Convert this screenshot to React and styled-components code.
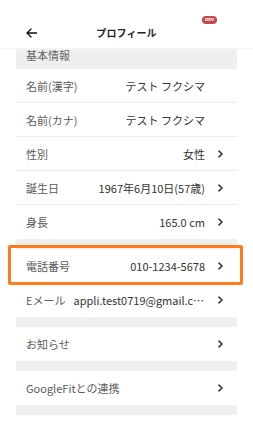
import React from "react";
import styled, { createGlobalStyle } from "styled-components";

const Global = createGlobalStyle`
  html, body { margin: 0; padding: 0; background: #fff; }
  body {
    font-family: "Noto Sans CJK JP", "Noto Sans", sans-serif;
    -webkit-font-smoothing: antialiased;
  }
  * { box-sizing: border-box; }
`;

const Page = styled.div`
  width: 253px;
  height: 445px;
  background: #fff;
  overflow: hidden;
`;

const Header = styled.header`
  position: relative;
  height: 49px;
  padding: 18px 26px 0;
  display: flex;
  align-items: flex-start;
  border-bottom: 1px solid #f6f6f6;
`;

const Back = styled.button`
  width: 12px;
  height: 30px;
  padding: 0;
  border: 0;
  background: none;
  display: flex;
  align-items: center;
  color: #111;
`;

const Title = styled.h1`
  flex: 1;
  margin: 0 12px 0 0;
  height: 30px;
  line-height: 30px;
  text-align: center;
  font-size: 10px;
  font-weight: 700;
  color: #222;
  letter-spacing: 0.1px;
`;

const DevBadge = styled.span`
  position: absolute;
  left: 202px;
  top: 16px;
  width: 15px;
  height: 8px;
  border-radius: 4px;
  background: #c9474a;
  color: #fff;
  font-family: "DejaVu Sans", sans-serif;
  font-size: 4px;
  font-weight: 700;
  line-height: 8px;
  text-align: center;
`;

const List = styled.div`
  margin: 0 16px;
  background: #efefef;
  display: flex;
  flex-direction: column;
`;

const SectionLabel = styled.div`
  height: 20px;
  padding-left: 10px;
  font-size: 11px;
  line-height: 12px;
  color: #666;
`;

const Group = styled.div`
  background: #fff;
  display: flex;
  flex-direction: column;
`;

const Spacer = styled.div`
  height: 10px;
`;

const Row = styled.div`
  position: relative;
  height: 34px;
  padding: 0 14px 0 10px;
  display: flex;
  align-items: center;
  gap: 8px;
  font-size: 11px;
  border-bottom: 1px solid #ededed;
  &:last-child { border-bottom: 0; }
`;

const Label = styled.span`
  flex: none;
  color: #5a5a5a;
  white-space: nowrap;
`;

const Value = styled.span`
  flex: 1;
  min-width: 0;
  text-align: right;
  color: #333;
  white-space: nowrap;
  overflow: hidden;
  text-overflow: ellipsis;
`;

const ChevronBox = styled.span`
  flex: none;
  width: 5px;
  margin-left: 5px;
  display: flex;
  align-items: center;
  visibility: ${(p) => (p.$hidden ? "hidden" : "visible")};
`;

const Highlight = styled.div`
  position: absolute;
  left: -8px;
  right: -6px;
  top: -4px;
  bottom: -3px;
  border: 3px solid #ff7b1c;
  border-radius: 2px;
  pointer-events: none;
`;

const Chevron = ({ hidden }) => (
  <ChevronBox $hidden={hidden}>
    <svg width="5" height="8" viewBox="0 0 5 8">
      <polyline points="1,1.2 4,4 1,6.8" fill="none" stroke="#333" strokeWidth="1.6" strokeLinecap="round" strokeLinejoin="round" />
    </svg>
  </ChevronBox>
);

const Item = ({ label, value, arrow = true, highlight }) => (
  <Row>
    <Label>{label}</Label>
    <Value>{value}</Value>
    <Chevron hidden={!arrow} />
    {highlight && <Highlight />}
  </Row>
);

export default function App() {
  return (
    <Page>
      <Global />
      <Header>
        <Back aria-label="戻る">
          <svg width="11" height="10" viewBox="0 0 11 10">
            <path d="M10.5 5H1.5M5 1L1 5l4 4" fill="none" stroke="#111" strokeWidth="1.3" strokeLinecap="round" strokeLinejoin="round" />
          </svg>
        </Back>
        <Title>プロフィール</Title>
        <DevBadge>DEV</DevBadge>
      </Header>
      <List>
        <SectionLabel>基本情報</SectionLabel>
        <Group>
          <Item label="名前(漢字)" value="テスト フクシマ" arrow={false} />
          <Item label="名前(カナ)" value="テスト フクシマ" arrow={false} />
          <Item label="性別" value="女性" />
          <Item label="誕生日" value="1967年6月10日(57歳)" />
          <Item label="身長" value="165.0 cm" />
        </Group>
        <Spacer />
        <Group>
          <Item label="電話番号" value="010-1234-5678" highlight />
          <Item label="Eメール" value="appli.test0719@gmail.com" />
        </Group>
        <Spacer />
        <Group>
          <Item label="お知らせ" value="" />
        </Group>
        <Spacer />
        <Group>
          <Item label="GoogleFitとの連携" value="" />
        </Group>
        <Spacer />
      </List>
    </Page>
  );
}
